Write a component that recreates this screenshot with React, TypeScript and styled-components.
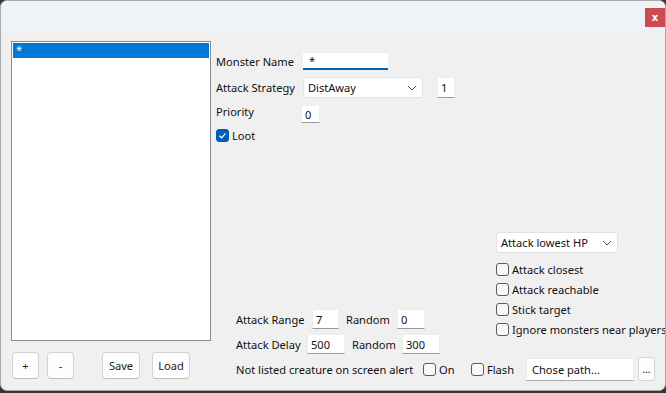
import React from 'react';
import styled, { createGlobalStyle } from 'styled-components';

const GlobalStyle = createGlobalStyle`
    html, body {
        margin: 0;
        padding: 0;
    }
    body {
        width: 666px;
        height: 393px;
        overflow: hidden;
        background: #3d3530;
        font-family: "Noto Sans", "Open Sans", sans-serif;
        font-size: 11.1px;
        color: #111;
    }
`;

const Chevron: React.FC = () => (
    <svg width="10" height="6" viewBox="0 0 10 6">
        <path d="M1 1 L5 5 L9 1" fill="none" stroke="#555" strokeWidth="1" />
    </svg>
);

const CheckMark: React.FC = () => (
    <svg width="9" height="9" viewBox="0 0 9 9">
        <path d="M1.5 4.8 L3.6 6.8 L7.5 2.4" fill="none" stroke="#fff" strokeWidth="1.2" />
    </svg>
);

const Check: React.FC<{ checked?: boolean; label?: string; width?: number }> = ({ checked, label, width }) => (
    <CheckLabel $w={width}>
        <Box $checked={!!checked}>{checked && <CheckMark />}</Box>
        {label && <span>{label}</span>}
    </CheckLabel>
);

const App: React.FC = () => {
    const options = ['Attack closest', 'Attack reachable', 'Stick target', 'Ignore monsters near players'];

    return (
        <>
            <GlobalStyle />
            <Window>
                <TitleBar>
                    <CloseButton>x</CloseButton>
                </TitleBar>
                <Body>
                    <LeftPane>
                        <ListBox>
                            <ListItem $selected>*</ListItem>
                        </ListBox>
                        <ButtonRow>
                            <Button $w={27} $gap={1}>+</Button>
                            <Button $w={27} $gap={8}>-</Button>
                            <Button $w={38} $gap={28}>Save</Button>
                            <Button $w={38} $gap={12}>Load</Button>
                        </ButtonRow>
                    </LeftPane>

                    <RightPane>
                        <FormRow $top={12} $h={17}>
                            <Label $w={87}>Monster Name</Label>
                            <NameInput>*</NameInput>
                        </FormRow>
                        <FormRow $top={7} $h={21}>
                            <Label $w={87}>Attack Strategy</Label>
                            <Select $w={120}>
                                DistAway
                                <Chevron />
                            </Select>
                            <TextBox $w={18} $gap={14}>1</TextBox>
                        </FormRow>
                        <FormRow $top={7} $h={18}>
                            <Label $w={85} $lift={3}>Priority</Label>
                            <TextBox $w={19}>0</TextBox>
                        </FormRow>
                        <FormRow $top={5} $h={14}>
                            <Check checked label="Loot" />
                        </FormRow>

                        <Lower>
                            <Fields>
                                <FormRow $h={20}>
                                    <Label $w={76}>Attack Range</Label>
                                    <TextBox $w={27}>7</TextBox>
                                    <Label $w={51} $gap={7}>Random</Label>
                                    <TextBox $w={28}>0</TextBox>
                                </FormRow>
                                <FormRow $top={5} $h={20}>
                                    <Label $w={71}>Attack Delay</Label>
                                    <TextBox $w={38}>500</TextBox>
                                    <Label $w={50} $gap={7}>Random</Label>
                                    <TextBox $w={38}>300</TextBox>
                                </FormRow>
                            </Fields>
                            <Options>
                                <Select $w={122}>
                                    Attack lowest HP
                                    <Chevron />
                                </Select>
                                <CheckList>
                                    {options.map((o) => (
                                        <CheckRow key={o}>
                                            <Check label={o} />
                                        </CheckRow>
                                    ))}
                                </CheckList>
                            </Options>
                        </Lower>

                        <AlertRow>
                            <Label $w={187}>Not listed creature on screen alert</Label>
                            <Check label="On" width={48} />
                            <Check label="Flash" width={55} />
                            <PathBox>Chose path...</PathBox>
                            <SmallButton>...</SmallButton>
                        </AlertRow>
                    </RightPane>
                </Body>
            </Window>
        </>
    );
};

const Window = styled.div`
    box-sizing: border-box;
    width: 666px;
    height: 391px;
    border: 1px solid #a8acb2;
    border-radius: 7px;
    overflow: hidden;
    background: #f0f0f0;
    display: flex;
    flex-direction: column;
`;

const TitleBar = styled.div`
    height: 30px;
    flex: none;
    background: #eff2f6;
    display: flex;
    justify-content: flex-end;
    align-items: flex-start;
    padding: 7px 0 0 0;
    box-sizing: border-box;
`;

const CloseButton = styled.div`
    width: 20px;
    height: 19px;
    background: #c94c4e;
    color: #fff;
    font-family: "DejaVu Sans", sans-serif;
    font-size: 10px;
    font-weight: bold;
    display: flex;
    align-items: center;
    justify-content: center;
`;

const Body = styled.div`
    flex: 1;
    display: flex;
    padding: 10px 0 0 10px;
`;

const LeftPane = styled.div`
    width: 200px;
    display: flex;
    flex-direction: column;
`;

const ListBox = styled.div`
    box-sizing: border-box;
    width: 200px;
    height: 300px;
    border: 1px solid #868a91;
    background: #fff;
    padding: 1px;
`;

const ListItem = styled.div<{ $selected?: boolean }>`
    height: 15px;
    line-height: 13px;
    padding-left: 3px;
    background: ${({ $selected }) => ($selected ? '#0078d7' : 'transparent')};
    color: ${({ $selected }) => ($selected ? '#fff' : '#000')};
`;

const ButtonRow = styled.div`
    display: flex;
    margin-top: 11px;
`;

const Button = styled.div<{ $w: number; $gap: number }>`
    box-sizing: border-box;
    width: ${({ $w }) => $w}px;
    height: 27px;
    margin-left: ${({ $gap }) => $gap}px;
    background: #fdfdfd;
    border: 1px solid #d3d3d3;
    border-bottom-color: #bdbdbd;
    border-radius: 4px;
    display: flex;
    align-items: center;
    justify-content: center;
    color: #1a1a1a;
`;

const RightPane = styled.div`
    flex: 1;
    margin-left: 5px;
    display: flex;
    flex-direction: column;
`;

const FormRow = styled.div<{ $top?: number; $h: number }>`
    display: flex;
    align-items: center;
    height: ${({ $h }) => $h}px;
    margin-top: ${({ $top }) => $top ?? 0}px;
`;

const Label = styled.span<{ $w: number; $gap?: number; $lift?: number }>`
    flex: none;
    width: ${({ $w }) => $w}px;
    margin-left: ${({ $gap }) => $gap ?? 0}px;
    position: relative;
    top: ${({ $lift }) => -($lift ?? 0)}px;
    white-space: nowrap;
`;

const TextBox = styled.div<{ $w: number; $gap?: number }>`
    box-sizing: border-box;
    width: ${({ $w }) => $w}px;
    height: 100%;
    margin-left: ${({ $gap }) => $gap ?? 0}px;
    background: #fff;
    border: 1px solid #ededed;
    border-bottom-color: #9a9a9a;
    padding-left: 3px;
    display: flex;
    align-items: center;
`;

const NameInput = styled.div`
    box-sizing: border-box;
    width: 85px;
    height: 17px;
    background: #fff;
    border-bottom: 2px solid #0063b1;
    padding: 0 0 0 6px;
    display: flex;
    align-items: center;
`;

const Select = styled.div<{ $w: number }>`
    box-sizing: border-box;
    width: ${({ $w }) => $w}px;
    height: 21px;
    background: #fff;
    border: 1px solid #e2e2e2;
    border-radius: 3px;
    padding: 0 5px 0 4px;
    display: flex;
    align-items: center;
    justify-content: space-between;
`;

const Lower = styled.div`
    display: flex;
    margin-top: 90px;
`;

const Fields = styled.div`
    width: 260px;
    margin-left: 20px;
    padding-top: 77px;
    display: flex;
    flex-direction: column;
`;

const Options = styled.div`
    display: flex;
    flex-direction: column;
`;

const CheckList = styled.div`
    margin-top: 6px;
    display: flex;
    flex-direction: column;
`;

const CheckRow = styled.div`
    height: 20px;
    display: flex;
    align-items: center;
`;

const CheckLabel = styled.label<{ $w?: number }>`
    flex: none;
    width: ${({ $w }) => ($w ? `${$w}px` : 'auto')};
    display: flex;
    align-items: center;
    white-space: nowrap;
    gap: 3px;
`;

const Box = styled.span<{ $checked: boolean }>`
    box-sizing: border-box;
    width: 13px;
    height: 13px;
    border-radius: 3px;
    border: 1px solid ${({ $checked }) => ($checked ? '#005fb8' : '#5c5c5c')};
    background: ${({ $checked }) => ($checked ? '#005fb8' : '#f9f9f9')};
    display: flex;
    align-items: center;
    justify-content: center;
`;

const AlertRow = styled.div`
    display: flex;
    align-items: center;
    height: 24px;
    margin-top: 3px;
    margin-left: 20px;
`;

const PathBox = styled.div`
    box-sizing: border-box;
    width: 108px;
    height: 23px;
    background: #fff;
    border: 1px solid #ededed;
    border-bottom-color: #a8a8a8;
    padding-left: 5px;
    display: flex;
    align-items: center;
`;

const SmallButton = styled.div`
    box-sizing: border-box;
    width: 17px;
    height: 24px;
    margin-left: 4px;
    background: #fdfdfd;
    border: 1px solid #d3d3d3;
    border-radius: 3px;
    display: flex;
    align-items: center;
    justify-content: center;
    font-size: 10px;
`;

export default App;
